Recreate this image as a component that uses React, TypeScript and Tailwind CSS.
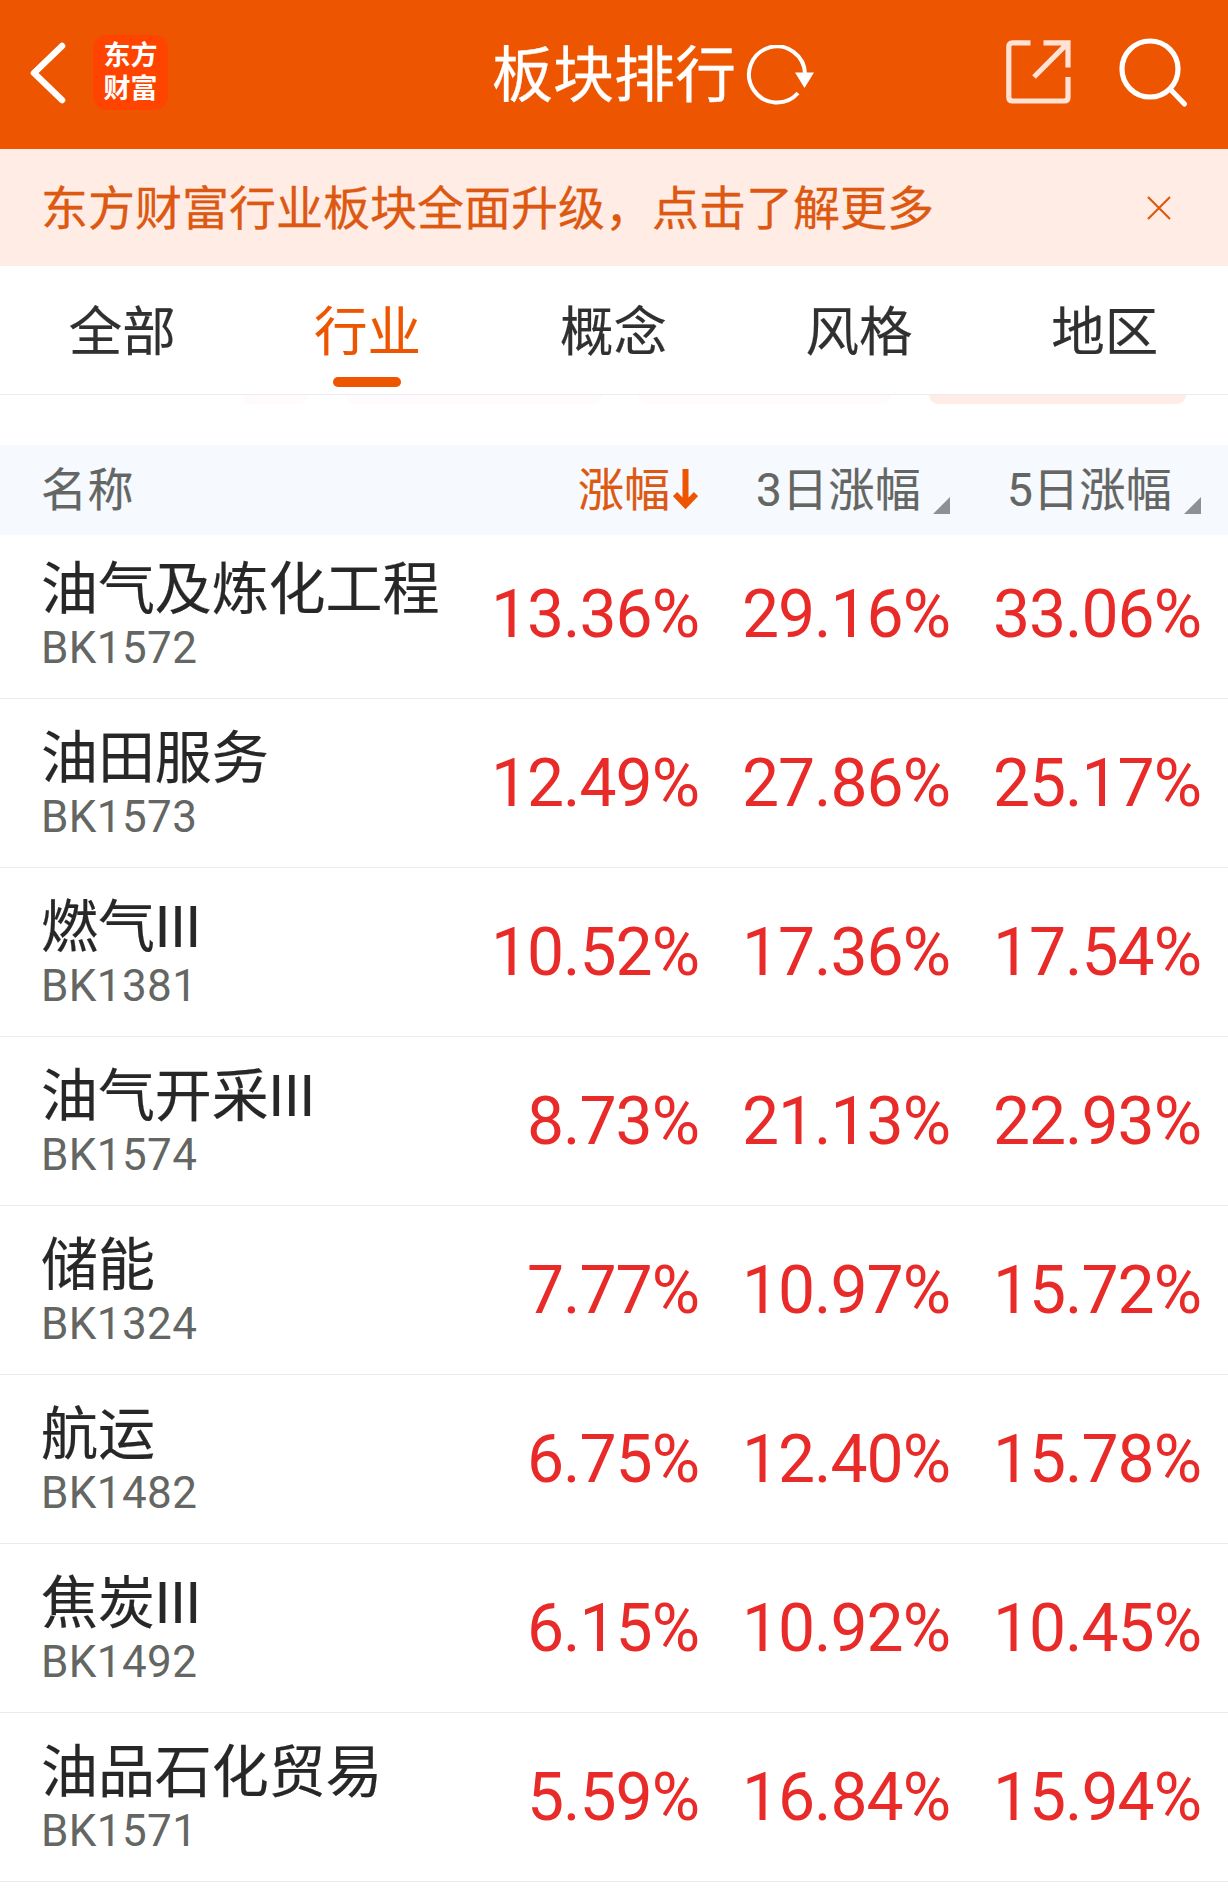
const rows = [
  { name: '油气及炼化工程', code: 'BK1572', values: ['13.36%', '29.16%', '33.06%'] },
  { name: '油田服务', code: 'BK1573', values: ['12.49%', '27.86%', '25.17%'] },
  { name: '燃气III', code: 'BK1381', values: ['10.52%', '17.36%', '17.54%'] },
  { name: '油气开采III', code: 'BK1574', values: ['8.73%', '21.13%', '22.93%'] },
  { name: '储能', code: 'BK1324', values: ['7.77%', '10.97%', '15.72%'] },
  { name: '航运', code: 'BK1482', values: ['6.75%', '12.40%', '15.78%'] },
  { name: '焦炭III', code: 'BK1492', values: ['6.15%', '10.92%', '10.45%'] },
  { name: '油品石化贸易', code: 'BK1571', values: ['5.59%', '16.84%', '15.94%'] },
];

const tabs = ['全部', '行业', '概念', '风格', '地区'];

function TopBar() {
  return (
    <header className="flex h-[149px] items-center justify-between bg-[#ee5500] pb-[4px] text-white">
      <div className="flex w-[492px] items-center pl-[29px]">
        <svg className="h-[62px] w-[38px]" viewBox="0 0 38 62" fill="none" stroke="currentColor" strokeWidth="6.5" strokeLinecap="round" strokeLinejoin="round">
          <path d="M33 4 5 31 33 58" />
        </svg>
        <div className="ml-[26px] flex h-[75px] w-[75px] flex-col items-center rounded-[14px] bg-[#ff4400] pt-[5px] text-[27px] leading-[33px] font-bold">
          <span>东方</span>
          <span>财富</span>
        </div>
      </div>
      <div className="flex items-center">
        <h1 className="pt-[6px] text-[61px] leading-[80px] [-webkit-text-stroke:0.3px]">板块排行</h1>
        <svg className="mt-[5px] ml-[10px] h-[60px] w-[70px]" viewBox="0 0 70 60" fill="none">
          <path d="M59 28A28 28 0 1 0 52 47" stroke="currentColor" strokeWidth="4" transform="translate(0 1)" />
          <path d="M49 27.500h19L58.500 43Z" fill="currentColor" />
        </svg>
      </div>
      <div className="flex flex-1 items-center justify-end gap-[47px] pr-[39px]">
        <svg className="h-[66px] w-[66px] text-[#ffe2d4]" viewBox="0 0 66 66" fill="none" stroke="currentColor" strokeWidth="5.2">
          <path d="M24.500 2.800H6.500Q2.800 2.800 2.800 6.500V57.300Q2.800 61 6.500 61H58.300Q62 61 62 57.300V37" />
          <path d="M37.500 2.800H62V27.500M62 2.800 28 37" />
        </svg>
        <svg className="h-[70px] w-[70px]" viewBox="0 0 70 70" fill="none" stroke="currentColor" strokeWidth="5.2" strokeLinecap="round">
          <circle cx="31" cy="31" r="28" />
          <path d="M52 52 65.500 66" />
        </svg>
      </div>
    </header>
  );
}

function Notice() {
  return (
    <div className="flex h-[117px] items-center justify-between bg-[#ffede5] pr-[57px] pl-[41px] text-[#dd5811]">
      <p className="pt-[3px] text-[47px] leading-[56px] [-webkit-text-stroke:0.3px]">东方财富行业板块全面升级，点击了解更多</p>
      <svg className="h-[24px] w-[24px]" viewBox="0 0 24 24" fill="none" stroke="currentColor" strokeWidth="2.2">
        <path d="M1 1 23 23M23 1 1 23" />
      </svg>
    </div>
  );
}

function Tabs() {
  return (
    <nav className="grid h-[129px] grid-cols-5 border-b border-[#ebecee] text-[#303030]">
      {tabs.map((tab, i) => (
        <div key={tab} className={i === 1 ? 'flex flex-col items-center pr-[2px] text-[#ee5500]' : 'flex flex-col items-center pr-[1px]'}>
          <span className="mt-[27px] text-[53.500px] leading-[80px] [-webkit-text-stroke:0.2px]">{tab}</span>
          {i === 1 && <span className="mt-[4px] h-[10px] w-[68px] rounded-full bg-[#ee5500]" />}
        </div>
      ))}
    </nav>
  );
}

function FilterEdge() {
  return (
    <div className="flex h-[50px] items-start">
      <span className="ml-[244px] h-[9px] w-[64px] rounded-br-[10px] bg-[#fffafd]" />
      <span className="ml-[38px] h-[9px] w-[256px] rounded-b-[10px] bg-[#fffafd]" />
      <span className="ml-[36px] h-[9px] w-[253px] rounded-b-[10px] bg-[#fffafd]" />
      <span className="ml-[38px] h-[9px] w-[257px] rounded-b-[12px] bg-[#ffede5]" />
    </div>
  );
}

function SortCorner() {
  return (
    <svg className="mt-[31px] ml-[12px] h-[17px] w-[17px]" viewBox="0 0 17 17" fill="#8e9095">
      <path d="M17 0V17H0Z" />
    </svg>
  );
}

function TableHead() {
  return (
    <div className="relative z-10 grid h-[90px] grid-cols-[1fr_251px_251px] items-center bg-[#f6faff] pr-[27px] pl-[41px] text-[46px] leading-[60px] text-[#646663] [-webkit-text-stroke:0.2px]">
      <div className="flex items-center justify-between">
        <span className="tracking-[0.5px]">名称</span>
        <span className="flex items-center text-[#dd5811]">
          涨幅
          <svg className="mr-[1px] ml-[3px] h-[42px] w-[25px] text-[#ee5500]" viewBox="0 0 25 42" fill="none" stroke="currentColor" strokeWidth="6">
            <path d="M12.500 0V36M2 25 12.500 36 23 25" />
          </svg>
        </span>
      </div>
      <div className="flex items-center justify-end tracking-[0.3px]">
        3日涨幅
        <SortCorner />
      </div>
      <div className="flex items-center justify-end tracking-[0.3px]">
        5日涨幅
        <SortCorner />
      </div>
    </div>
  );
}

function Value({ text }: { text: string }) {
  return <span className="pt-[45px] text-right text-[66px] leading-[80px] tracking-[-1px] text-[#e82a28]">{text}</span>;
}

export default function App() {
  return (
    <main className="h-[1889px] w-[1228px] overflow-hidden bg-white font-['Roboto','Noto_Sans_CJK_SC',sans-serif]">
      <TopBar />
      <Notice />
      <Tabs />
      <FilterEdge />
      <TableHead />
      <div className="-mt-[5px]">
        {rows.map((row) => (
          <div key={row.code} className="grid h-[169px] grid-cols-[1fr_251px_251px] border-b border-[#ebebeb] pr-[27px] pl-[41px]">
            <div className="flex justify-between">
              <div className="flex flex-col pt-[25px]">
                <span className="text-[57px] leading-[70px] tracking-[-0.1px] text-[#272727] [-webkit-text-stroke:0.2px]">{row.name}</span>
                <span className="mt-[-2px] text-[44px] leading-[50px] tracking-[0.4px] text-[#646663]">{row.code}</span>
              </div>
              <Value text={row.values[0]} />
            </div>
            <Value text={row.values[1]} />
            <Value text={row.values[2]} />
          </div>
        ))}
      </div>
    </main>
  );
}
